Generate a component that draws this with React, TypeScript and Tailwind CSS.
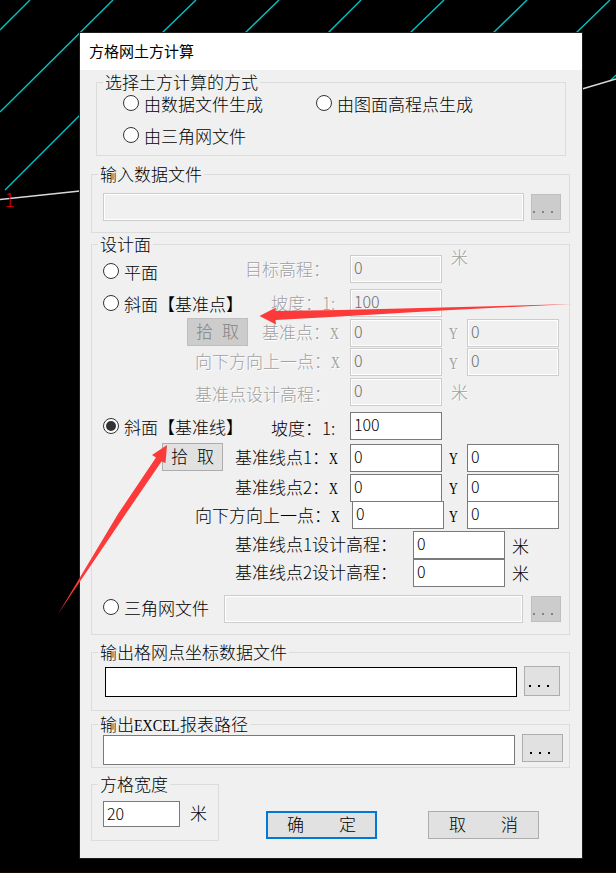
import type { ReactNode } from 'react'

function Group({ title, className, children }: { title: ReactNode; className: string; children: ReactNode }) {
  return (
    <section className={`border border-[#dcdcdc] ${className}`}>
      <h2 className="-mt-[9px] ml-1.5 flex h-[18px] w-fit bg-[#f0f0f0] px-[2px] leading-[16px]">{title}</h2>
      {children}
    </section>
  )
}

function Text({ children, className = '', disabled = false }: { children: ReactNode; className?: string; disabled?: boolean }) {
  return (
    <span
      className={`h-[18px] shrink-0 leading-[17px] whitespace-pre ${
        disabled ? 'text-[#a0a0a0] [text-shadow:1px_1px_0_#ffffff]' : ''
      } ${className}`}
    >
      {children}
    </span>
  )
}

// Half-width latin letter, same advance as a digit
function Axis({ children }: { children: string }) {
  return (
    <span className="inline-block w-[9px] font-['Liberation_Serif',serif] leading-none whitespace-nowrap">
      <span className="inline-block origin-left scale-x-[0.72]">{children}</span>
    </span>
  )
}

function Radio({ checked = false, className = '' }: { checked?: boolean; className?: string }) {
  return (
    <span className={`flex size-4 shrink-0 items-center justify-center rounded-full border border-[#333333] bg-white ${className}`}>
      {checked && <span className="size-2.5 rounded-full bg-[#333333]" />}
    </span>
  )
}

function Field({ value = '', className = 'h-7 w-[92px]', disabled = false }: { value?: string; className?: string; disabled?: boolean }) {
  return (
    <div
      className={`shrink-0 border pl-[3px] text-[16px] leading-[22px] ${
        disabled ? 'border-[#cccccc] bg-[#f0f0f0] text-[#6d6d6d] shadow-[inset_0_0_0_1px_#ffffff]' : 'border-[#7a7a7a] bg-white'
      } ${className}`}
    >
      {value}
    </div>
  )
}

function Browse({ className, disabled = false }: { className: string; disabled?: boolean }) {
  return (
    <button
      className={`flex shrink-0 items-end border ${
        disabled ? 'border-[#bfbfbf] bg-[#cccccc] text-[#838383]' : 'border-[#adadad] bg-[#e1e1e1] text-black'
      } ${className}`}
    >
      <span className="flex gap-[7px]">
        <i className="size-[2px] bg-current" />
        <i className="size-[2px] bg-current" />
        <i className="size-[2px] bg-current" />
      </span>
    </button>
  )
}

function Pick({ className, disabled = false }: { className: string; disabled?: boolean }) {
  return (
    <button
      className={`flex h-7 w-[61px] shrink-0 justify-center gap-[9px] border leading-[24px] ${
        disabled ? 'border-[#bfbfbf] bg-[#cccccc] text-[#838383]' : 'border-[#adadad] bg-[#e1e1e1]'
      } ${className}`}
    >
      <span>拾</span>
      <span>取</span>
    </button>
  )
}

function Lead({ children }: { children?: ReactNode }) {
  return <div className="flex w-[258px] shrink-0">{children}</div>
}

function YField({ value, disabled = false, gap = 'w-[25px] pl-[7px]', top = 'mt-1' }: { value: string; disabled?: boolean; gap?: string; top?: string }) {
  return (
    <>
      <Text disabled={disabled} className={`${gap} ${top}`}><Axis>Y</Axis></Text>
      <Field value={value} disabled={disabled} />
    </>
  )
}

function Backdrop() {
  return (
    <svg className="absolute inset-0" width="616" height="873" fill="none">
      <g stroke="#00c4c4" strokeWidth="1.4">
        <path d="M0 30 30 0M0 112 113 0M5 190 80 115" />
        <path d="M162 33 196 0M245 33 279 0M328 33 361 0M410 33 444 0M493 33 527 0M576 33 610 0M610 81 616 75" />
      </g>
      <path d="M0 199.500 80 191M582 89 616 79" stroke="#d8d8d8" strokeWidth="1.4" />
      <text x="4.500" y="207" fill="#d00000" fontFamily="Noto Sans CJK SC" fontWeight="300" fontSize="19">1</text>
      <path d="M0 872.500H616" stroke="#1c0505" />
    </svg>
  )
}

function Arrows() {
  return (
    <svg className="pointer-events-none absolute inset-0" width="616" height="873" fill="#fc3a3a">
      <path d="M259.500 316 276 307.500 275.500 311 340 310 442 307.500 572 304 442 310.500 340 316.500 275.500 320 276 324.500Z" />
      <path d="M167 445 152 455 156 457.500 118 514 58 614 127 512 161.500 461.500 165.500 463Z" />
    </svg>
  )
}

export default function App() {
  return (
    <main className="relative h-[873px] w-[616px] overflow-hidden bg-black pt-[33px] pl-20 font-['Noto_Sans_CJK_SC',sans-serif] text-[17px] font-light text-black">
      <Backdrop />
      <div className="relative flex h-[825px] w-[502px] flex-col bg-[#f0f0f0] shadow-[0_0_0_1px_#1c1c1c]">
        <header className="h-[37px] shrink-0 bg-white pl-[9px] text-[15px] leading-[36px] font-normal">
          方格网土方计算
        </header>

        <Group title="选择土方计算的方式" className="mt-3 ml-4 h-[74px] w-[470px] shrink-0">
          <div className="mt-[3px] flex h-8 pl-[26px]">
            <Radio />
            <Text className="ml-[5px]">由数据文件生成</Text>
            <Radio className="ml-[53px]" />
            <Text className="ml-[5px]">由图面高程点生成</Text>
          </div>
          <div className="flex pl-[26px]">
            <Radio />
            <Text className="ml-[5px]">由三角网文件</Text>
          </div>
        </Group>

        <Group title="输入数据文件" className="mt-[18px] ml-[11px] h-[59px] w-[479px] shrink-0">
          <div className="mt-[9px] flex items-center pl-[11px]">
            <Field disabled className="h-7 w-[421px]" />
            <Browse disabled className="ml-[7px] h-[26px] w-[30px] pb-1.5 pl-[1px]" />
          </div>
        </Group>

        <Group title="设计面" className="mt-[11px] ml-[11px] h-[391px] w-[479px] shrink-0">
          <div className="mt-px flex h-[34px]">
            <Lead>
              <Radio className="mt-2 ml-[11px]" />
              <Text className="mt-2 ml-[5px]">平面</Text>
              <Text disabled className="mt-[5px] ml-[87px]">目标高程：</Text>
            </Lead>
            <Field disabled value="0" />
            <Text disabled className="-mt-[7px] ml-[9px]">米</Text>
          </div>
          <div className="flex h-[30px]">
            <Lead>
              <Radio className="mt-1.5 ml-[11px]" />
              <Text className="mt-1.5 ml-[5px]">斜面【基准点】</Text>
              <Text disabled className="mt-[5px] ml-7">坡度：1:</Text>
            </Lead>
            <Field disabled value="100" />
          </div>
          <div className="flex h-[29px]">
            <Lead>
              <Pick disabled className="-mt-px ml-[95px]" />
              <Text disabled className="mt-1 ml-[14px]">基准点：<Axis>X</Axis></Text>
            </Lead>
            <Field disabled value="0" />
            <YField disabled value="0" />
          </div>
          <div className="flex h-[30px]">
            <Lead>
              <Text disabled className="mt-1 ml-[103px]">向下方向上一点：<Axis>X</Axis></Text>
            </Lead>
            <Field disabled value="0" />
            <YField disabled value="0" top="mt-[5px]" />
          </div>
          <div className="flex h-[34px]">
            <Lead>
              <Text disabled className="mt-[7px] ml-[103px]">基准点设计高程：</Text>
            </Lead>
            <Field disabled value="0" />
            <Text disabled className="mt-[5px] ml-[9px]">米</Text>
          </div>
          <div className="flex h-8">
            <Lead>
              <Radio checked className="mt-1.5 ml-[11px]" />
              <Text className="mt-1.5 ml-[5px]">斜面【基准线】</Text>
              <Text className="mt-[7px] ml-7">坡度：1:</Text>
            </Lead>
            <Field value="100" />
          </div>
          <div className="flex h-[30px]">
            <Lead>
              <Pick className="-mt-px ml-[70px]" />
              <Text className="mt-1 ml-3">基准线点1：<Axis>X</Axis></Text>
            </Lead>
            <Field value="0" />
            <YField value="0" />
          </div>
          <div className="flex h-[27px]">
            <Lead>
              <Text className="mt-1 ml-[143px]">基准线点2：<Axis>X</Axis></Text>
            </Lead>
            <Field value="0" />
            <YField value="0" />
          </div>
          <div className="flex h-[30px]">
            <Lead>
              <Text className="mt-[5px] ml-[103px]">向下方向上一点：<Axis>X</Axis></Text>
            </Lead>
            <Field value="0" className="ml-[2px] h-7 w-[92px]" />
            <YField value="0" gap="w-[23px] pl-[5px]" top="mt-[5px]" />
          </div>
          <div className="flex h-7">
            <Text className="mt-1 ml-[143px] w-[178px]">基准线点1设计高程：</Text>
            <Field value="0" />
            <Text className="mt-1.5 ml-[7px]">米</Text>
          </div>
          <div className="flex h-9">
            <Text className="mt-1 ml-[143px] w-[178px]">基准线点2设计高程：</Text>
            <Field value="0" />
            <Text className="mt-[5px] ml-[7px]">米</Text>
          </div>
          <div className="flex">
            <Radio className="mt-1 ml-[11px]" />
            <Text className="mt-1 ml-[5px] w-[100px]">三角网文件</Text>
            <Field disabled className="h-7 w-[299px]" />
            <Browse disabled className="mt-px ml-2 h-[26px] w-[30px] pb-1.5 pl-[1px]" />
          </div>
        </Group>

        <Group title="输出格网点坐标数据文件" className="mt-[17px] ml-[11px] h-[59px] w-[479px] shrink-0">
          <div className="mt-[5px] flex pl-[13px]">
            <div className="h-[30px] w-[412px] border border-black bg-white" />
            <Browse className="-mt-px ml-[7px] h-[30px] w-9 pb-2 pl-1" />
          </div>
        </Group>

        <Group
          title={
            <>
              输出
              <span className="w-[46px] font-['Liberation_Serif',serif] leading-[19px] whitespace-nowrap">
                <span className="inline-block origin-left scale-x-[0.83]">EXCEL</span>
              </span>
              报表路径
            </>
          }
          className="mt-[13px] ml-[11px] h-[44px] w-[479px] shrink-0"
        >
          <div className="flex pl-[11px]">
            <Field className="mt-[1px] h-[30px] w-[412px]" />
            <Browse className="ml-[7px] h-7 w-[41px] pb-[7px] pl-[7px]" />
          </div>
        </Group>

        <div className="mt-4 ml-[11px] flex shrink-0">
          <Group title="方格宽度" className="h-[57px] w-32">
            <div className="mt-[7px] flex pl-[11px]">
              <Field value="20" className="h-[26px] w-[77px]" />
              <Text className="mt-[3px] ml-[10px]">米</Text>
            </div>
          </Group>
          <button className="mt-[27px] ml-[47px] flex h-7 w-[111px] justify-center gap-[35px] border-2 border-[#0078d7] bg-[#e1e1e1] leading-[22px]">
            <span>确</span>
            <span>定</span>
          </button>
          <button className="mt-[27px] ml-[51px] flex h-7 w-[111px] justify-center gap-[35px] border border-[#adadad] bg-[#e1e1e1] leading-[24px]">
            <span>取</span>
            <span>消</span>
          </button>
        </div>
      </div>
      <Arrows />
    </main>
  )
}
